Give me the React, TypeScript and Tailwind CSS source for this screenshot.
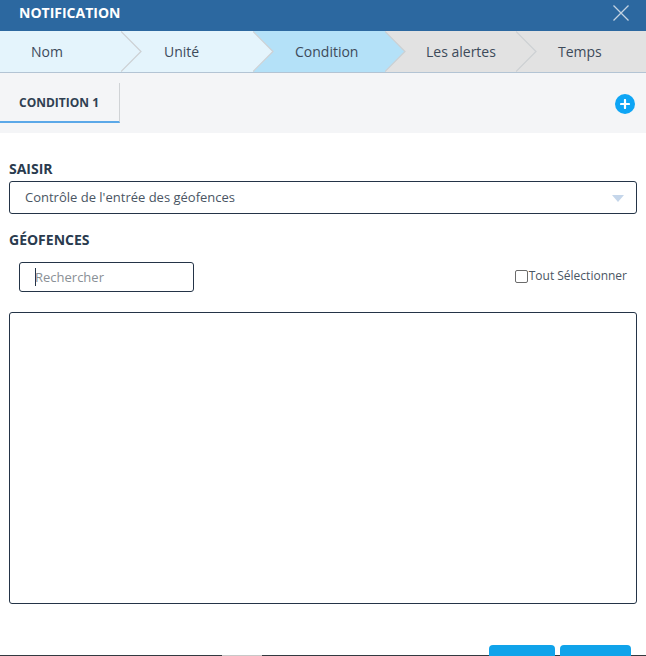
const steps = [
  { label: 'Nom', width: 'w-[121px]', pad: 'pl-[31px]', bg: 'bg-[#e4f4fc]', fill: '#e4f4fc' },
  { label: 'Unité', width: 'w-[132px]', pad: 'pl-[43px]', bg: 'bg-[#e4f4fc]', fill: '#e4f4fc' },
  { label: 'Condition', width: 'w-[132px]', pad: 'pl-[42px]', bg: 'bg-[#b4e1f8]', fill: '#b4e1f8' },
  { label: 'Les alertes', width: 'w-[131px]', pad: 'pl-[41px]', bg: 'bg-[#e2e2e2]', fill: '#e2e2e2' },
  { label: 'Temps', width: 'flex-1', pad: 'pl-[42px]', bg: 'bg-[#e2e2e2]', fill: '#e2e2e2' },
];

function Steps() {
  return (
    <div className="flex h-[42px] border-b border-[#b3c4d4]">
      {steps.map((step, i) => (
        <div
          key={step.label}
          className={`relative flex items-center ${step.width} ${step.pad} ${step.bg} text-[14px] text-[#3d4a5a]`}
          style={{ zIndex: steps.length - i }}
        >
          {step.label}
          {i < steps.length - 1 ? (
            <svg className="absolute left-full top-0" width="21" height="41" viewBox="0 0 21 41">
              <path d="M0 0 L20 20.5 L0 41 Z" fill={step.fill} />
              <path d="M0 0.5 L20 20.5 L0 40.5" fill="none" stroke="#cdd0d3" strokeWidth="1.2" />
            </svg>
          ) : null}
        </div>
      ))}
    </div>
  );
}

export default function App() {
  return (
    <div className="relative flex h-[656px] w-[646px] flex-col overflow-hidden bg-white font-['Open_Sans',sans-serif] text-[#243447]">
      <header className="flex h-[31px] items-start justify-between bg-[#2c68a0] pl-[19px] pr-[17px]">
        <span className="mt-[3px] text-[14px] leading-[20px] font-bold text-white">NOTIFICATION</span>
        <svg width="16" height="16" viewBox="0 0 16 16" className="mt-[5px]">
          <path d="M0.5 0.5 L15.5 15.5 M15.5 0.5 L0.5 15.5" stroke="#c3d3e2" strokeWidth="1.3" fill="none" />
        </svg>
      </header>

      <Steps />

      <div className="flex h-[60px] items-center justify-between bg-[#f4f5f7] pr-[11px]">
        <div className="flex h-[40px] w-[120px] items-center border-r border-b-2 border-r-[#d0d3d6] border-b-[#5ba8e8] pt-[2px] pl-[19px] text-[12px] font-bold text-[#2f3f52]">
          CONDITION 1
        </div>
        <div className="mt-[2px] flex h-[20px] w-[20px] items-center justify-center rounded-full bg-[#0ea5f5]">
          <svg width="10" height="10" viewBox="0 0 10 10">
            <path d="M5 1 V9 M1 5 H9" stroke="#fff" strokeWidth="2.2" fill="none" strokeLinecap="round" />
          </svg>
        </div>
      </div>

      <div className="flex flex-1 flex-col px-[9px] pt-[25px]">
        <label className="text-[14px] font-bold leading-[22px] text-[#2a3b4e]">SAISIR</label>
        <div className="mt-[1px] flex h-[33px] w-[628px] items-center justify-between rounded-[3px] border border-[#243447] pl-[15px] pr-[12px] text-[13px] text-[#4a5563]">
          <span>Contrôle de l'entrée des géofences</span>
          <span className="mt-[2px] h-0 w-0 border-x-[6px] border-t-[7px] border-x-transparent border-t-[#c5d6ea]" />
        </div>

        <label className="mt-[15px] text-[14px] font-bold leading-[22px] text-[#2a3b4e]">GÉOFENCES</label>

        <div className="mt-[11px] flex items-center justify-between pl-[10px] pr-[10px]">
          <div className="flex h-[30px] w-[175px] items-center rounded-[3px] border border-[#243447] pl-[15px] text-[13px] text-[#8a9096]">
            <span className="h-[18px] w-px bg-[#243447]" />
            <span className="-ml-px pt-[1px]">Rechercher</span>
          </div>
          <label className="mb-[3px] flex items-center text-[12px] text-[#4a5563]">
            <span className="mt-[2px] mr-px h-[13px] w-[13px] rounded-[2px] border border-[#6b6b6b] bg-white" />
            Tout Sélectionner
          </label>
        </div>

        <div className="mt-[20px] h-[292px] w-[628px] rounded-[3px] border border-[#243447]" />
      </div>

      <div className="absolute bottom-0 left-0 right-0 h-px bg-[#333a40]" />
      <div className="absolute bottom-0 left-[222px] h-px w-[40px] bg-[#c8c8c8]" />
      <div className="absolute bottom-0 left-[489px] flex gap-[5px]">
        <div className="h-[11px] w-[66px] rounded-t-[4px] bg-[#10a3ea]" />
        <div className="h-[11px] w-[71px] rounded-t-[4px] bg-[#10a3ea]" />
      </div>
    </div>
  );
}
